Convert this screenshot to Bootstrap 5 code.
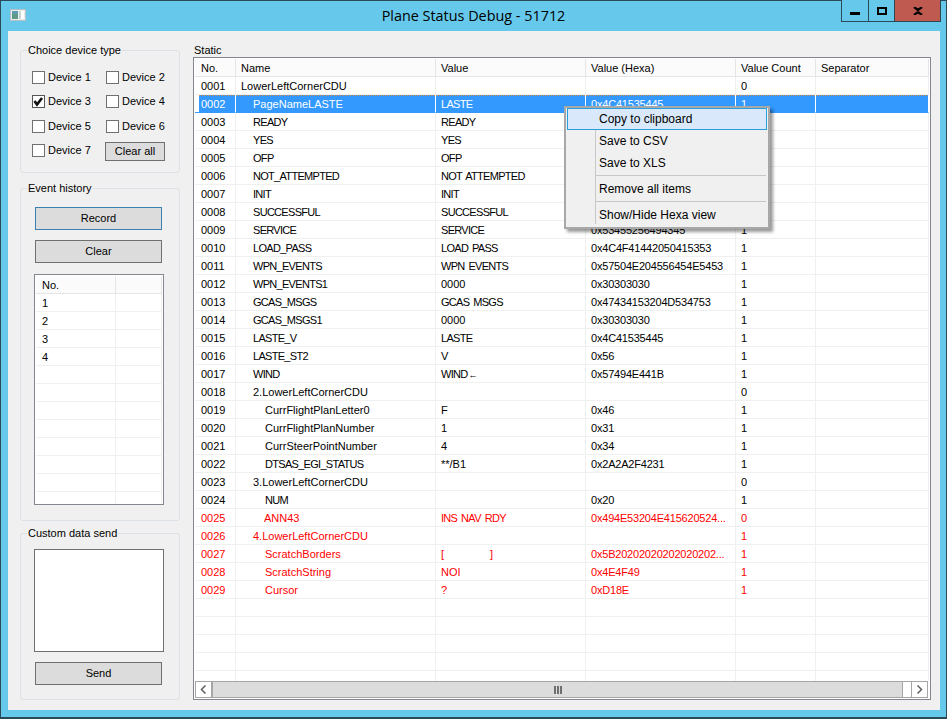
<!DOCTYPE html>
<html lang="en"><head><meta charset="utf-8"><title>Plane Status Debug - 51712</title>
<link href="https://cdn.jsdelivr.net/npm/bootstrap@5.3.0/dist/css/bootstrap.min.css" rel="stylesheet">
<style>
html,body{height:719px;overflow:hidden;background:#66c9eb}
body{font:11px/13px "Liberation Sans",Arial,sans-serif;color:#000}
.win{height:719px;border:1px solid #2b4a58;border-bottom-width:2px;background:#66c9eb;width:947px}
.titlebar{height:30px;position:relative}
.appicon{margin:8px 0 0 9px;display:block}
.wintitle{position:absolute;left:0;right:0;top:5px;text-align:center;font:14.4px/20px "Open Sans",sans-serif;color:#000}
.capbtns{position:absolute;top:-1px;right:5px;height:22px;border:1px solid #2b4a58;border-top:0;background:#66c9eb}
.capbtn{height:21px;display:flex;align-items:center;justify-content:center;border-right:1px solid #2b4a58}
.capbtn.b1{width:27px}.capbtn.b2{width:26px}.capbtn.b3{width:45px;background:#bf5a50;border:0}
.client{background:#f0f0f0;margin:0 6px 0 7px;height:679px;padding:13px 9px 10px 12px;gap:13px}
.leftcol{width:160px}
.grp{border:1px solid #dce1e7;border-radius:3px;padding:0;margin:0}
.grp legend{float:none;width:auto;font-size:11px;line-height:13px;margin:0 0 0 6px;padding:0 1px}
.grp1{height:129px;margin-bottom:9px}
.grp2{height:339px;margin-bottom:6px}
.grp3{flex:1 1 auto}
.devgrid{display:grid;grid-template-columns:74px 74px;grid-template-rows:24px 25px 24px 24px;padding:14px 0 0 11px}
.dev{display:flex;align-items:flex-start;gap:3px;margin:0}
.dev .form-check-input{width:13px;height:13px;margin:0;border:1px solid #707070;border-radius:0;background-color:#fff;flex:none}
.dev .form-check-input:checked{border-color:#555;background-color:#fff;background-image:url("data:image/svg+xml,%3Csvg xmlns='http://www.w3.org/2000/svg' viewBox='0 0 13 13'%3E%3Cpath d='M2.5 6 5 9.5 10 3' fill='none' stroke='%23111' stroke-width='2.6'/%3E%3C/svg%3E");background-size:13px}
.devtext{line-height:12px}
.winbtn{--bs-btn-padding-y:0;--bs-btn-padding-x:0;--bs-btn-font-size:11px;--bs-btn-line-height:13px;--bs-btn-border-radius:0;--bs-btn-bg:#dcdcdc;--bs-btn-border-color:#707070;--bs-btn-color:#000;display:block;width:127px;height:23px;margin-left:14px}
.winbtn.small1{width:60px;height:19px;margin:-2px 0 0 -1px}
.winbtn.focusb{--bs-btn-border-color:#3c7fb1;margin-bottom:10px}
.evbody{padding:12px 0 0}
.listbx{width:130px;height:231px;margin:11px 0 0 13px;border:1px solid #828790;background:#fff;padding:1px;overflow:hidden}
.datatbl{table-layout:fixed;border-collapse:separate;border-spacing:0;margin:0;width:100%;--bs-table-bg:transparent;--bs-table-color:#000}
.datatbl th,.datatbl td{padding:2px 5px 0;height:18px;line-height:15px;font-size:11px;font-weight:400;border:0;border-right:1px solid #f0f0f0;border-bottom:1px solid #f0f0f0;white-space:nowrap;overflow:hidden;vertical-align:top;box-shadow:none}
.datatbl th{background:#fbfbfb;border-right-color:#e5e5e5;border-bottom-color:#e5e5e5;height:18px}
.datatbl th:first-child,.datatbl td:first-child{padding-left:6px}
.datatbl tr.sel td{background:#3399ff;color:#fff;border-right-color:#fff;border-bottom-color:#3399ff;background-image:repeating-linear-gradient(90deg,#d08a48 0 1px,#3399ff 1px 2px);background-size:100% 1px;background-repeat:no-repeat}
.datatbl tr.sel td:first-child{box-shadow:inset 4px 0 0 #fff}
.datatbl tr.bad td{color:#ff0000}
.datatbl td.cp{letter-spacing:-.7px;word-spacing:1.5px}
.datatbl td.hx{letter-spacing:-.2px}
.arrowg{font-size:9px;line-height:0;letter-spacing:0;margin-left:1px}
.i1{padding-left:17px!important}.i2{padding-left:29px!important}.i3{padding-left:28px!important}
.custom{display:block;width:130px;height:103px;margin:9px 0 10px 13px;border:1px solid #707070;border-radius:0;background:#fff;padding:0;resize:none}
.rightcol{flex:1 1 auto;min-width:0}
.staticlbl{height:13px;padding-left:1px}
.gridbox{border:1px solid #828790;background:#fff;padding:1px;height:643px;width:738px}
.gridscroll{height:622px;overflow:hidden}
.hscroll{height:17px;margin-right:1px;border:1px solid #a6a6a6;border-width:1px 0 1px;background:#fff}
.hbtn{width:17px;height:17px;margin-top:-1px;margin-bottom:-1px;border:1px solid #a6a6a6;background:#fff;display:flex;align-items:center;justify-content:center;flex:none}
.hthumb{width:691px;background:#dcdcdc;border-left:1px solid #a6a6a6;border-right:1px solid #a6a6a6;display:flex;align-items:center;justify-content:center;gap:1px}
.grip{width:2px;height:8px;background:#707070}
.ctxmenu{position:absolute;left:563px;top:105px;width:206px;height:123px;background:#f0f0f0;border:2px solid #a8a8a8;box-shadow:3px 3px 3px rgba(0,0,0,.4);padding:0;z-index:5}
.ctxrail{position:absolute;left:29px;top:22px;bottom:3px;width:1px;background:#c8c8c8}
.ctxitem{height:22px;line-height:22px;padding-left:32px;margin:0 1px;font-size:12px}
.ctxitem.hot{background:#d9e9fb;border:1px solid #26a0da;padding-left:31px;line-height:20px}
.ctxsep{height:1px;background:#c8c8c8;margin:1px 2px 0 30px}
.ctxsep+.ctxitem{margin-top:2px}
</style></head>
<body>
<div class="win d-flex flex-column position-relative">
 <div class="titlebar">
  <svg class="appicon" width="16" height="13" viewBox="0 0 16 13"><rect x=".5" y=".5" width="15" height="11" fill="#e8edee" stroke="#b4c2c6"/><rect x="2" y="2" width="6" height="3" fill="#5d9bb0"/><rect x="2" y="5" width="6" height="5" fill="#5f9a86"/><rect x="9" y="2" width="2" height="8" fill="#c4d6d4"/><rect x="11" y="2" width="3" height="8" fill="#fff"/></svg>
  <div class="wintitle">Plane Status Debug - 51712</div>
  <div class="capbtns d-flex">
   <div class="capbtn b1"><svg width="10" height="8"><rect y="5" width="10" height="3" fill="#000"/></svg></div>
   <div class="capbtn b2"><svg width="10" height="8"><rect x="1" y="1" width="8" height="6" fill="none" stroke="#000" stroke-width="2"/></svg></div>
   <div class="capbtn b3"><svg width="10" height="8" viewBox="0 0 10 8"><path d="M1 0 5 3 9 0 M1 8 5 5 9 8" stroke="#000" stroke-width="2.2" fill="none"/></svg></div>
  </div>
 </div>
 <div class="client d-flex">
  <div class="leftcol d-flex flex-column">
   <fieldset class="grp grp1"><legend>Choice device type</legend>
    <div class="devgrid">
     <label class="dev"><input class="form-check-input" type="checkbox"><span class="devtext">Device 1</span></label>
     <label class="dev"><input class="form-check-input" type="checkbox"><span class="devtext">Device 2</span></label>
     <label class="dev"><input class="form-check-input" type="checkbox" checked><span class="devtext">Device 3</span></label>
     <label class="dev"><input class="form-check-input" type="checkbox"><span class="devtext">Device 4</span></label>
     <label class="dev"><input class="form-check-input" type="checkbox"><span class="devtext">Device 5</span></label>
     <label class="dev"><input class="form-check-input" type="checkbox"><span class="devtext">Device 6</span></label>
     <label class="dev"><input class="form-check-input" type="checkbox"><span class="devtext">Device 7</span></label>
     <div><button class="btn winbtn small1" type="button">Clear all</button></div>
    </div>
   </fieldset>
   <fieldset class="grp grp2"><legend>Event history</legend>
    <div class="evbody">
     <button class="btn winbtn focusb" type="button">Record</button>
     <button class="btn winbtn" type="button">Clear</button>
     <div class="listbx">
      <table class="table datatbl"><colgroup><col style="width:80px"><col></colgroup>
       <thead><tr><th>No.</th><th></th></tr></thead>
       <tbody>
        <tr><td>1</td><td></td></tr><tr><td>2</td><td></td></tr><tr><td>3</td><td></td></tr><tr><td>4</td><td></td></tr>
        <tr><td></td><td></td></tr><tr><td></td><td></td></tr><tr><td></td><td></td></tr><tr><td></td><td></td></tr>
        <tr><td></td><td></td></tr><tr><td></td><td></td></tr><tr><td></td><td></td></tr><tr><td></td><td></td></tr>
       </tbody>
      </table>
     </div>
    </div>
   </fieldset>
   <fieldset class="grp grp3"><legend>Custom data send</legend>
    <textarea class="custom" aria-label="Custom data"></textarea>
    <button class="btn winbtn" type="button">Send</button>
   </fieldset>
  </div>
  <div class="rightcol d-flex flex-column">
   <div class="staticlbl">Static</div>
   <div class="gridbox d-flex flex-column">
    <div class="gridscroll">
     <table class="table datatbl"><colgroup><col style="width:41px"><col style="width:200px"><col style="width:150px"><col style="width:150px"><col style="width:80px"><col></colgroup>
      <thead><tr><th>No.</th><th>Name</th><th>Value</th><th>Value (Hexa)</th><th>Value Count</th><th>Separator</th></tr></thead>
      <tbody>
       <tr><td>0001</td><td>LowerLeftCornerCDU</td><td></td><td></td><td>0</td><td></td></tr>
       <tr class="sel"><td>0002</td><td class="i1">PageNameLASTE</td><td class="cp">LASTE</td><td class="hx">0x4C41535445</td><td>1</td><td></td></tr>
       <tr><td>0003</td><td class="i1 cp">READY</td><td class="cp">READY</td><td class="hx">0x5245414459</td><td>1</td><td></td></tr>
       <tr><td>0004</td><td class="i1 cp">YES</td><td class="cp">YES</td><td class="hx">0x594553</td><td>1</td><td></td></tr>
       <tr><td>0005</td><td class="i1 cp">OFP</td><td class="cp">OFP</td><td class="hx">0x4F4650</td><td>1</td><td></td></tr>
       <tr><td>0006</td><td class="i1 cp">NOT_ATTEMPTED</td><td class="cp">NOT ATTEMPTED</td><td class="hx">0x4E4F5420415454454D50</td><td>1</td><td></td></tr>
       <tr><td>0007</td><td class="i1 cp">INIT</td><td class="cp">INIT</td><td class="hx">0x494E4954</td><td>1</td><td></td></tr>
       <tr><td>0008</td><td class="i1 cp">SUCCESSFUL</td><td class="cp">SUCCESSFUL</td><td class="hx">0x53554343455353</td><td>1</td><td></td></tr>
       <tr><td>0009</td><td class="i1 cp">SERVICE</td><td class="cp">SERVICE</td><td class="hx">0x53455256494345</td><td>1</td><td></td></tr>
       <tr><td>0010</td><td class="i1 cp">LOAD_PASS</td><td class="cp">LOAD PASS</td><td class="hx">0x4C4F41442050415353</td><td>1</td><td></td></tr>
       <tr><td>0011</td><td class="i1 cp">WPN_EVENTS</td><td class="cp">WPN EVENTS</td><td class="hx">0x57504E204556454E5453</td><td>1</td><td></td></tr>
       <tr><td>0012</td><td class="i1 cp">WPN_EVENTS1</td><td>0000</td><td class="hx">0x30303030</td><td>1</td><td></td></tr>
       <tr><td>0013</td><td class="i1 cp">GCAS_MSGS</td><td class="cp">GCAS MSGS</td><td class="hx">0x47434153204D534753</td><td>1</td><td></td></tr>
       <tr><td>0014</td><td class="i1 cp">GCAS_MSGS1</td><td>0000</td><td class="hx">0x30303030</td><td>1</td><td></td></tr>
       <tr><td>0015</td><td class="i1 cp">LASTE_V</td><td class="cp">LASTE</td><td class="hx">0x4C41535445</td><td>1</td><td></td></tr>
       <tr><td>0016</td><td class="i1 cp">LASTE_ST2</td><td>V</td><td class="hx">0x56</td><td>1</td><td></td></tr>
       <tr><td>0017</td><td class="i1 cp">WIND</td><td class="cp">WIND<span class="arrowg">&#8592;</span></td><td class="hx">0x57494E441B</td><td>1</td><td></td></tr>
       <tr><td>0018</td><td class="i1">2.LowerLeftCornerCDU</td><td></td><td></td><td>0</td><td></td></tr>
       <tr><td>0019</td><td class="i2">CurrFlightPlanLetter0</td><td>F</td><td class="hx">0x46</td><td>1</td><td></td></tr>
       <tr><td>0020</td><td class="i2">CurrFlightPlanNumber</td><td>1</td><td class="hx">0x31</td><td>1</td><td></td></tr>
       <tr><td>0021</td><td class="i2">CurrSteerPointNumber</td><td>4</td><td class="hx">0x34</td><td>1</td><td></td></tr>
       <tr><td>0022</td><td class="i2 cp">DTSAS_EGI_STATUS</td><td>**/B1</td><td class="hx">0x2A2A2F4231</td><td>1</td><td></td></tr>
       <tr><td>0023</td><td class="i1">3.LowerLeftCornerCDU</td><td></td><td></td><td>0</td><td></td></tr>
       <tr><td>0024</td><td class="i2 cp">NUM</td><td></td><td class="hx">0x20</td><td>1</td><td></td></tr>
       <tr class="bad"><td>0025</td><td class="i3">ANN43</td><td class="cp">INS NAV RDY</td><td class="hx">0x494E53204E415620524...</td><td>0</td><td></td></tr>
       <tr class="bad"><td>0026</td><td class="i1">4.LowerLeftCornerCDU</td><td></td><td></td><td>1</td><td></td></tr>
       <tr class="bad"><td>0027</td><td class="i2">ScratchBorders</td><td>[&#160;&#160;&#160;&#160;&#160;&#160;&#160;&#160;&#160;&#160;&#160;&#160;&#160;&#160;&#160;]</td><td class="hx">0x5B20202020202020202...</td><td>1</td><td></td></tr>
       <tr class="bad"><td>0028</td><td class="i2">ScratchString</td><td>NOI</td><td class="hx">0x4E4F49</td><td>1</td><td></td></tr>
       <tr class="bad"><td>0029</td><td class="i2">Cursor</td><td>?</td><td class="hx">0xD18E</td><td>1</td><td></td></tr>
       <tr><td></td><td></td><td></td><td></td><td></td><td></td></tr>
       <tr><td></td><td></td><td></td><td></td><td></td><td></td></tr>
       <tr><td></td><td></td><td></td><td></td><td></td><td></td></tr>
       <tr><td></td><td></td><td></td><td></td><td></td><td></td></tr>
       <tr><td></td><td></td><td></td><td></td><td></td><td></td></tr>
      </tbody>
     </table>
    </div>
    <div class="hscroll d-flex">
     <div class="hbtn"><svg width="7" height="9" viewBox="0 0 7 9"><path d="M5.5 .5 1.5 4.5 5.5 8.5" fill="none" stroke="#606060" stroke-width="1.5"/></svg></div>
     <div class="hthumb"><span class="grip"></span><span class="grip"></span><span class="grip"></span></div>
     <div class="flex-grow-1"></div>
     <div class="hbtn"><svg width="7" height="9" viewBox="0 0 7 9"><path d="M1.5 .5 5.5 4.5 1.5 8.5" fill="none" stroke="#606060" stroke-width="1.5"/></svg></div>
    </div>
   </div>
  </div>
 </div>
 <div class="ctxmenu">
  <div class="ctxrail"></div>
  <div class="ctxitem hot">Copy to clipboard</div>
  <div class="ctxitem">Save to CSV</div>
  <div class="ctxitem">Save to XLS</div>
  <div class="ctxsep"></div>
  <div class="ctxitem">Remove all items</div>
  <div class="ctxsep"></div>
  <div class="ctxitem">Show/Hide Hexa view</div>
 </div>
</div>
</body></html>
